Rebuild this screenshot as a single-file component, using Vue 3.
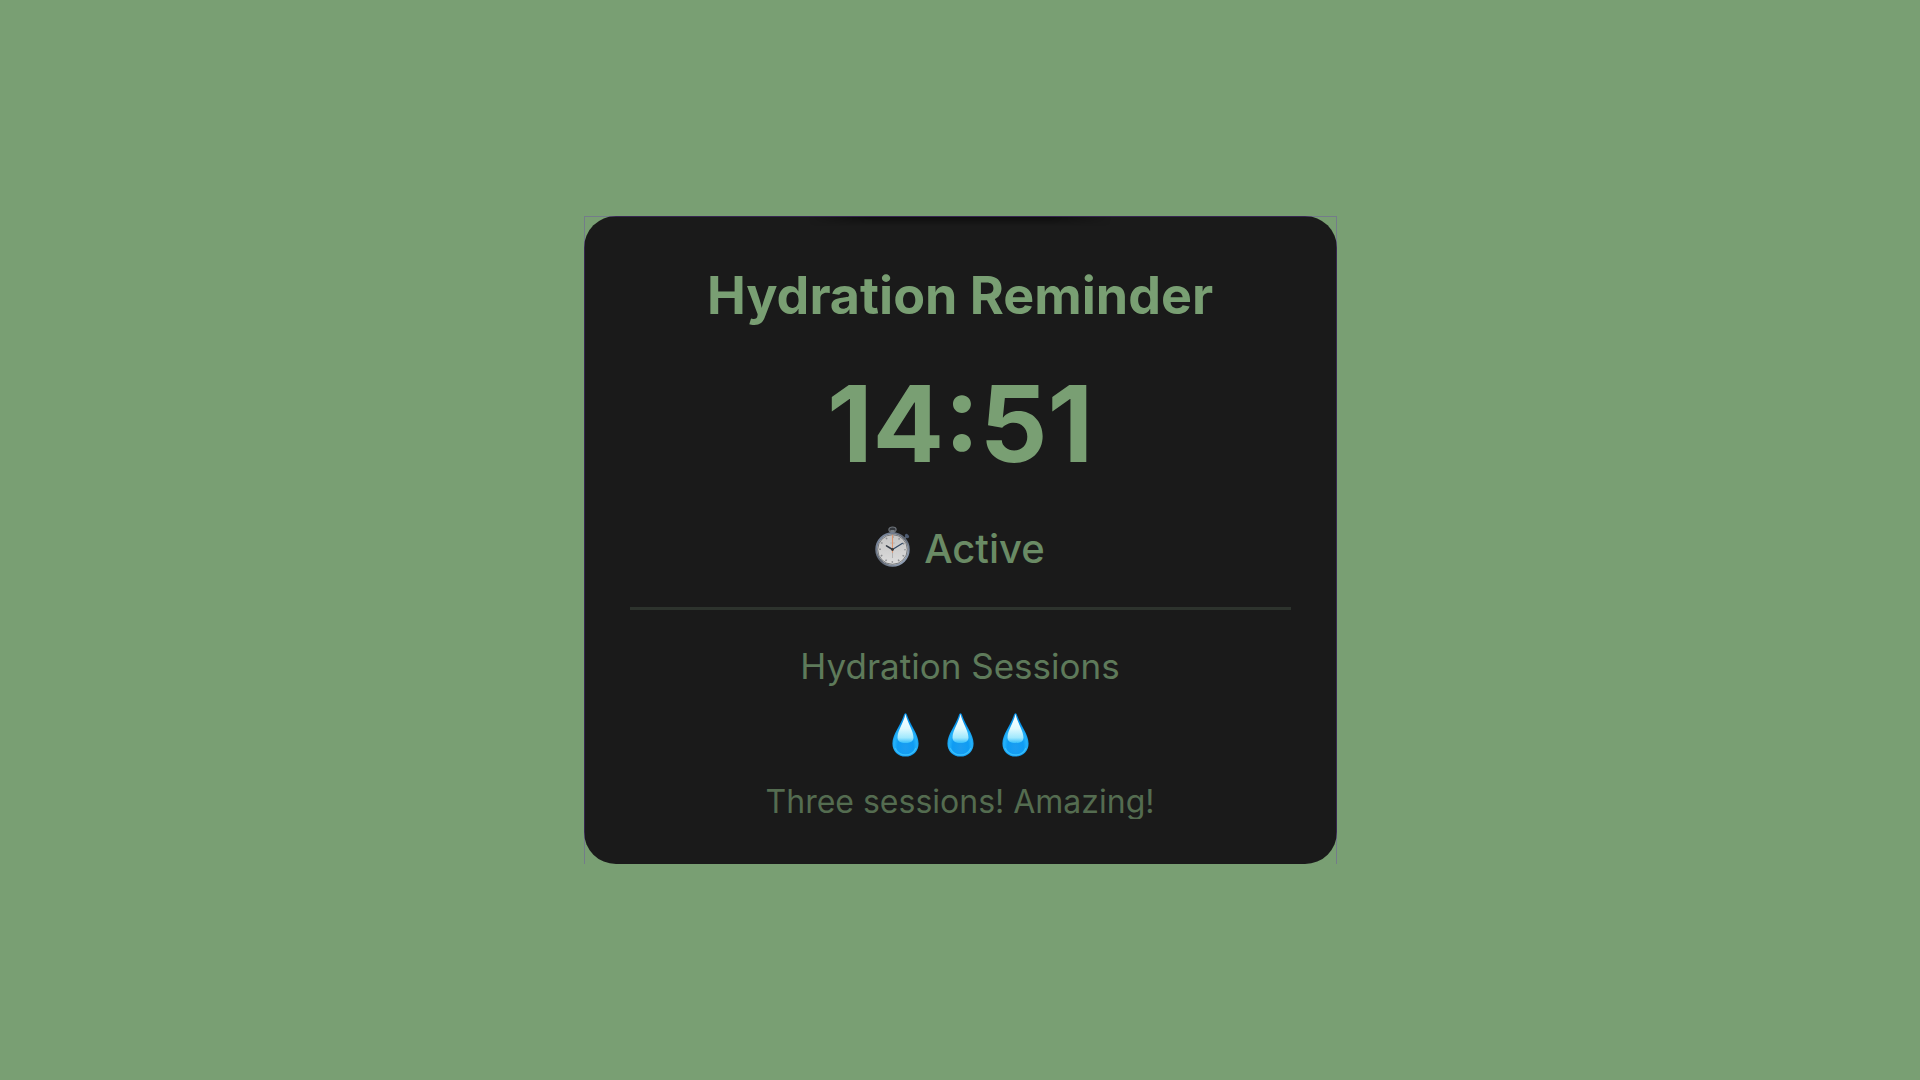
<template>
	<main class="page">
		<section class="card">
			<h1 class="title">Hydration Reminder</h1>

			<div class="timer">{{ time }}</div>

			<div class="status">
				<svg class="stopwatch" viewBox="0 0 36 42" aria-hidden="true">
					<defs>
						<linearGradient id="rim" x1="0" y1="0" x2="1" y2="1">
							<stop offset="0" stop-color="#8493ab" />
							<stop offset="0.5" stop-color="#5d6470" />
							<stop offset="1" stop-color="#a3b4cc" />
						</linearGradient>
						<linearGradient id="dial" x1="0" y1="0" x2="0" y2="1">
							<stop offset="0" stop-color="#c4c4c4" />
							<stop offset="1" stop-color="#dcdcdc" />
						</linearGradient>
					</defs>
					<ellipse cx="17.5" cy="3.6" rx="3.6" ry="2.6" fill="#34383d" stroke="#6e747b" stroke-width="1.2" />
					<rect x="15.4" y="4" width="4.2" height="4" fill="#777d84" />
					<path d="M29.5 12.5l2.3-2.3" stroke="#59636f" stroke-width="2" />
					<ellipse cx="32" cy="10" rx="2.4" ry="1.7" fill="#4c5a70" transform="rotate(40 32 10)" />
					<circle cx="17.5" cy="23.5" r="16.2" fill="#d0d0d0" stroke="url(#rim)" stroke-width="2" />
					<circle cx="17.5" cy="23.5" r="14.8" fill="url(#dial)" stroke="#55575a" stroke-width="0.7" />
					<circle cx="17.5" cy="23.5" r="12.5" fill="none" stroke="#8b8d90" stroke-width="1.7" stroke-dasharray="1.5 5.045" stroke-dashoffset="0.75" />
					<path d="M15.2 17h4.6M17.5 27v5" stroke="#b2b2b2" stroke-width="1" />
					<path d="M17.5 8.8v18" stroke="#dc9570" stroke-width="1.1" />
					<path d="M17.5 23.5l-6-3.6" stroke="#343b45" stroke-width="1.6" stroke-linecap="round" />
					<path d="M17.5 23.5l10-6.2" stroke="#344b66" stroke-width="1.2" stroke-linecap="round" />
					<circle cx="17.5" cy="23.5" r="1.4" fill="#3f3b3a" />
				</svg>
				<span>{{ status }}</span>
			</div>

			<div class="sessions">
				<h2 class="sessions-title">Hydration Sessions</h2>

				<div class="drops">
					<svg v-for="n in sessions" :key="n" class="drop" viewBox="0 0 27 44" aria-hidden="true">
						<defs>
							<radialGradient :id="'water' + n" cx="0.5" cy="0.78" r="0.55">
								<stop offset="0" stop-color="#1c9df0" />
								<stop offset="0.55" stop-color="#0f9cf3" />
								<stop offset="0.8" stop-color="#25b2fa" />
								<stop offset="1" stop-color="#0792e8" />
							</radialGradient>
							<linearGradient :id="'shine' + n" x1="0" y1="0" x2="0" y2="1">
								<stop offset="0" stop-color="#ffffff" />
								<stop offset="0.5" stop-color="#e0fafe" />
								<stop offset="0.82" stop-color="#a0e8fd" />
								<stop offset="1" stop-color="#35bffc" />
							</linearGradient>
						</defs>
						<path d="M13.5 0.3C14.4 0.3 14.9 1.5 15.4 2.9C18.6 12.6 26.6 21.2 26.6 30.4C26.6 37.9 20.9 43.6 13.5 43.6S0.4 37.9 0.4 30.4C0.4 21.2 8.4 12.6 11.6 2.9C12.1 1.5 12.6 0.3 13.5 0.3Z" :fill="`url(#water${n})`" />
						<path d="M3.3 35.5C5.4 40 9 42 13.5 42S21.6 40 23.7 35.5" fill="none" stroke="#42c8ff" stroke-width="1.3" stroke-linecap="round" opacity="0.8" />
						<path d="M13.5 1C15.4 9.5 21.5 18 21.5 24.5C21.5 28.5 18.4 30 13.5 30S5.5 28.5 5.5 24.5C5.5 18 11.6 9.5 13.5 1Z" :fill="`url(#shine${n})`" />
					</svg>
				</div>

				<p class="message">{{ message }}</p>
			</div>
		</section>
	</main>
</template>

<script setup>
import { ref } from 'vue'

const time = ref('14:51')
const status = ref('Active')
const sessions = ref(3)
const message = ref('Three sessions! Amazing!')
</script>

<style>
body {
	margin: 0;
	background: #799f73;
}
</style>

<style scoped>
.page {
	min-height: 100vh;
	display: flex;
	align-items: center;
	justify-content: center;
	font-family: Inter, "Liberation Sans", sans-serif;
	background: #799f73;
	color: #799f73;
}

.card {
	position: relative;
	box-sizing: border-box;
	width: 100%;
	max-width: 753px;
	padding: 46px 46px 45px;
	text-align: center;
	border-radius: 32px;
	background: #1a1a1a;
}

/* hairline window frame with square corners */
.card::before {
	content: "";
	position: absolute;
	inset: 0;
	border: 1px solid rgba(110, 60, 180, .35);
	border-bottom: none;
	pointer-events: none;
}

/* soft shade along the top edge */
.card::after {
	content: "";
	position: absolute;
	top: 1px;
	left: 30%;
	right: 30%;
	height: 9px;
	background: linear-gradient(rgba(0, 0, 0, .45), transparent);
	mask-image: linear-gradient(90deg, transparent, #000 20%, #000 80%, transparent);
	pointer-events: none;
}

.title {
	margin: 0 0 41px;
	font-size: 52px;
	line-height: 68px;
	font-weight: 700;
}

.timer {
	font-size: 106px;
	line-height: 105px;
	font-weight: 700;
}

.status {
	display: flex;
	align-items: center;
	justify-content: center;
	gap: 13px;
	margin: 49px 0 34px;
	font-size: 40px;
	line-height: 48px;
	font-weight: 500;
	color: #6a8b65;
}

.stopwatch {
	width: 36px;
	height: 42px;
	margin-bottom: 4px;
}

.sessions {
	padding-top: 35px;
	border-top: 3px solid #2d332d;
}

.sessions-title {
	margin: 0;
	font-size: 35px;
	line-height: 42px;
	font-weight: 400;
	color: #5e7a5a;
}

.drops {
	display: flex;
	justify-content: center;
	gap: 28px;
	margin: 26px 0 27px;
}

.drop {
	width: 27px;
	height: 44px;
}

.message {
	margin: 0;
	font-size: 32px;
	line-height: 35px;
	overflow: hidden;
	color: #546c50;
}
</style>
